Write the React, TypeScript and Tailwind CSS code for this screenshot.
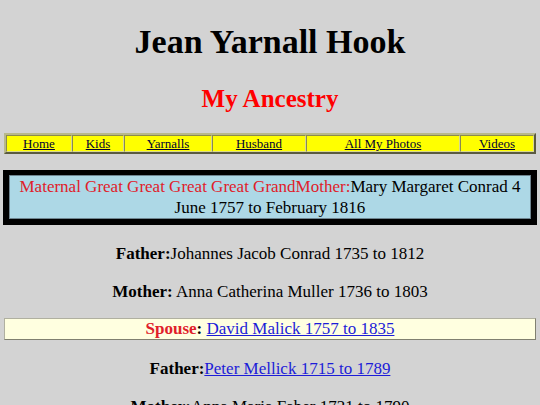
import React from 'react';

const navItems = [
  { label: 'Home', w: 'w-[66px]' },
  { label: 'Kids', w: 'w-[52px]' },
  { label: 'Yarnalls', w: 'w-[88px]' },
  { label: 'Husband', w: 'w-[94px]' },
  { label: 'All My Photos', w: 'w-[154px]' },
  { label: 'Videos', w: 'flex-1' },
];

const App: React.FC = () => {
  return (
    <div className="min-h-screen bg-[#d3d3d3] text-black font-['Liberation_Serif',serif] pt-[22px]">
      <h1 className="text-center text-[34px] font-bold leading-[39px]">Jean Yarnall Hook</h1>
      <h2 className="mt-[23px] text-center text-[25px] font-bold leading-[29px] text-[#ff0000]">My Ancestry</h2>

      {/* nav bar */}
      <div className="mx-[4px] mt-[20px] flex border-2 border-t-[#b8b88a] border-l-[#b8b88a] border-b-[#5a5a40] border-r-[#5a5a40] bg-[#ffff00]">
        {navItems.map((item) => (
          <div
            key={item.label}
            className={`${item.w} border border-t-[#8a8a50] border-l-[#8a8a50] border-b-[#d8d890] border-r-[#d8d890] text-center text-[13px] leading-[15px]`}
          >
            <a href="#" className="underline text-[#000033]">{item.label}</a>
          </div>
        ))}
      </div>

      {/* main person */}
      <div className="mx-[3px] mt-[16px] border-x-[6px] border-t-[5px] border-b-[6px] border-black">
        <div className="border border-[#6f8590] bg-[#add8e6] text-center text-[17px] leading-[21px]">
          <span className="text-[#e0202a]">Maternal Great Great Great Great GrandMother:</span>
          Mary Margaret Conrad 4 June 1757 to February 1816
        </div>
      </div>

      <p className="mt-[18px] text-center text-[17px] leading-[21px]">
        <b>Father:</b>Johannes Jacob Conrad 1735 to 1812
      </p>
      <p className="mt-[17px] text-center text-[17px] leading-[21px]">
        <b>Mother:</b> Anna Catherina Muller 1736 to 1803
      </p>

      <div className="mx-[4px] mt-[16px] border border-t-[#b0b0a0] border-l-[#b0b0a0] border-b-[#808070] border-r-[#808070] bg-[#ffffe0] text-center text-[17px] leading-[20px]">
        <b className="text-[#e0202a]">Spouse</b><b>:</b>{' '}
        <a href="#" className="underline text-[#1c1cd8]">David Malick 1757 to 1835</a>
      </div>

      <p className="mt-[18px] text-center text-[17px] leading-[21px]">
        <b>Father:</b><a href="#" className="underline text-[#1c1cd8]">Peter Mellick 1715 to 1789</a>
      </p>
      <p className="mt-[17px] pb-[18px] text-center text-[17px] leading-[21px]">
        <b>Mother:</b>Anna Maria Faber 1721 to 1790
      </p>
    </div>
  );
};

export default App;
